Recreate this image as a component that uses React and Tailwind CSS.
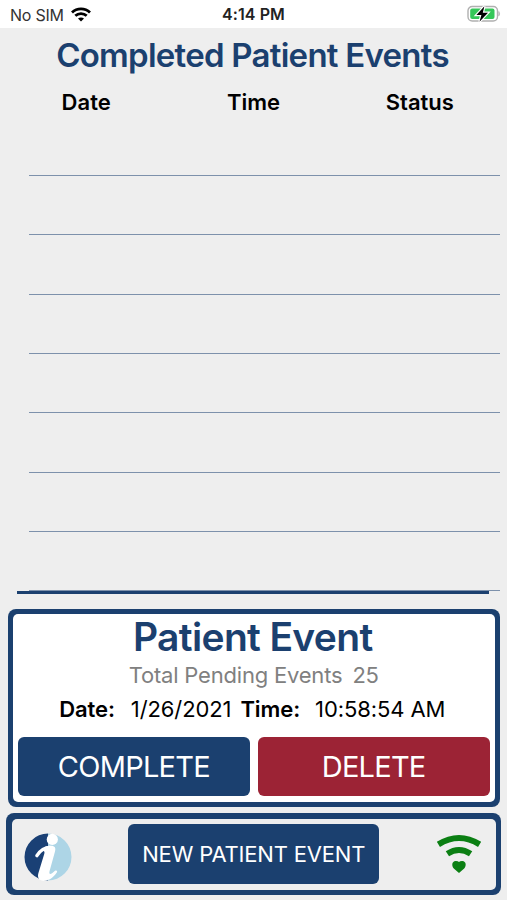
import React from 'react';

const rows = [1, 2, 3, 4, 5, 6, 7, 8];

const WifiIcon = () => (
  <svg className="w-5 h-[15px]" viewBox="0 0 20 15" fill="none" stroke="#000" strokeWidth="2.8">
    <path d="M1 5.4C6 .6 14 .6 19 5.4" />
    <path d="M4.3 8.8C7.5 5.8 12.5 5.8 15.7 8.8" />
    <path d="M7 11.6C8.8 10 11.2 10 13 11.6L10 14.6Z" fill="#000" stroke="none" />
  </svg>
);

const BatteryIcon = () => (
  <svg className="w-[34px] h-[18px]" viewBox="0 0 34 18">
    <rect x="1" y="1.5" width="29.5" height="14.5" rx="4.2" fill="#fff" stroke="#b0b0b0" strokeWidth="1.4" />
    <path d="M31.8 6.5q1.6 2.2 0 4.4z" fill="#b0b0b0" stroke="#b0b0b0" strokeWidth="0.6" />
    <rect x="3.2" y="3.6" width="24.3" height="10.4" rx="2" fill="#35c759" />
    <path d="M17.4 1.2L9.4 10h5l-1.9 6.8L21 7.7h-5.2z" fill="#000" stroke="#fff" strokeWidth="2.4" paintOrder="stroke" />
  </svg>
);

const InfoIcon = () => (
  <svg className="w-12 h-12" viewBox="0 0 48 48">
    <path d="M24 0.5a23.5 23.5 0 0 0 0 47z" fill="#1a4075" />
    <path d="M24 0.5a23.5 23.5 0 0 1 0 47z" fill="#add5e6" />
    <circle cx="28.3" cy="6.4" r="5.6" fill="#fff" />
    <path
      d="M12.9 22.6C16.5 17 21 14.4 26.2 14.4"
      fill="none"
      stroke="#fff"
      strokeWidth="3.4"
      strokeLinecap="round"
    />
    <path
      d="M20.5 14.2C23 12.9 25 12.7 27 12.7C31 12.7 32 15 31 18.6L25.6 38C24.8 41.2 26 41.8 28.4 39.9L31 37.8C32.4 36.8 33.8 38 32.8 39.5C29.5 44.5 25 47.8 19.5 47.7C14.3 47.4 13.2 44 14.5 39.8L20.3 20.7C21 18.2 19.8 17.2 17.7 18.4Z"
      fill="#fff"
    />
  </svg>
);

const SignalIcon = () => (
  <svg className="w-[46px] h-10" viewBox="0 0 46 40" fill="none" stroke="#0b7f13" strokeWidth="6">
    <path d="M2.4 10.4Q23-2.4 43.6 10.4" />
    <path d="M11.4 19.8Q23 12.3 34.6 19.8" />
    <path
      d="M23 39L17.8 34.4C15.4 32 15.8 27.2 19.6 27Q22 26.9 23 28Q24 26.9 26.4 27C30.2 27.2 30.6 32 28.2 34.4Z"
      fill="#0b7f13"
      stroke="none"
    />
  </svg>
);

const App = () => {
  return (
    <div className="w-[507px] h-[900px] overflow-hidden bg-[#eeeeee] font-['Inter','Liberation_Sans',sans-serif] text-black whitespace-nowrap">
      {/* Status bar */}
      <header className="h-7 bg-white grid grid-cols-3 items-center pl-2 pr-1.5">
        <div className="flex items-center gap-[7px] pl-0.5">
          <span className="pt-px text-[16px] text-[#333] tracking-[-0.25px]">No SIM</span>
          <WifiIcon />
        </div>
        <span className="pr-0.5 text-center text-[16px] font-semibold tracking-[0.1px] text-[#222]">4:14 PM</span>
        <div className="flex justify-end">
          <BatteryIcon />
        </div>
      </header>

      {/* Completed events */}
      <section className="h-[566px]">
        <h1 className="h-[54px] pr-[2px] leading-[54px] text-center text-[33px] font-semibold tracking-[-0.74px] text-[#1b406f]">
          Completed Patient Events
        </h1>
        <div className="h-10 grid grid-cols-3 items-center text-center text-[22px] font-semibold pl-[3px] pr-[5px]">
          <span>Date</span>
          <span className="pl-0.5">Time</span>
          <span className="pl-0.5">Status</span>
        </div>
        <div className="ml-[29px] mr-[7px] -mt-[5.2px]">
          {rows.map((row) => (
            <div key={row} className="h-[59.3px] border-b border-[#7d91ab]"></div>
          ))}
        </div>
        <div className="relative ml-[17px] mr-[18px] h-[3px] bg-[#1b406f]"></div>
      </section>

      {/* Pending event */}
      <section className="mt-[14.5px] ml-[7.5px] mr-[7px] h-[198.5px] rounded-[8px] bg-[#1b406f] p-[5.5px]">
        <div className="h-full rounded-[5px] bg-white px-[5px] flex flex-col">
          <h2 className="h-[46px] pr-[2px] leading-[46px] text-center text-[39px] font-semibold tracking-[-0.65px] text-[#1b406f]">
            Patient Event
          </h2>
          <div className="h-[30px] flex items-center justify-center gap-2.5 text-[22px] tracking-[-0.2px] text-[#808080]">
            <span>Total Pending Events</span>
            <span>25</span>
          </div>
          <div className="h-[38px] flex items-center justify-center pr-[3px] text-[22px] tracking-[-0.1px]">
            <span className="font-semibold">Date:</span>
            <span className="ml-[16px]">1/26/2021</span>
            <span className="ml-[9px] font-semibold">Time:</span>
            <span className="ml-[15px]">10:58:54 AM</span>
          </div>
          <div className="mt-[9px] flex gap-2 text-[29px] tracking-[-0.75px] text-white">
            <button className="flex-1 h-[59px] rounded-[6px] bg-[#1b406f]">COMPLETE</button>
            <button className="flex-1 h-[59px] rounded-[6px] bg-[#9c2335]">DELETE</button>
          </div>
        </div>
      </section>

      {/* Bottom bar */}
      <footer className="mt-[6px] mx-[6px] h-[82px] rounded-[8px] bg-[#1b406f] p-[5.5px]">
        <div className="h-full rounded-[5px] bg-[#eeeeee] flex items-center justify-between pl-[12px] pr-[13.5px]">
          <div className="mt-[5px]">
            <InfoIcon />
          </div>
          <button className="w-[251px] h-[60px] rounded-[6px] bg-[#1b406f] text-white text-[22px] tracking-[-0.18px]">
            NEW PATIENT EVENT
          </button>
          <SignalIcon />
        </div>
      </footer>
    </div>
  );
};

export default App;
